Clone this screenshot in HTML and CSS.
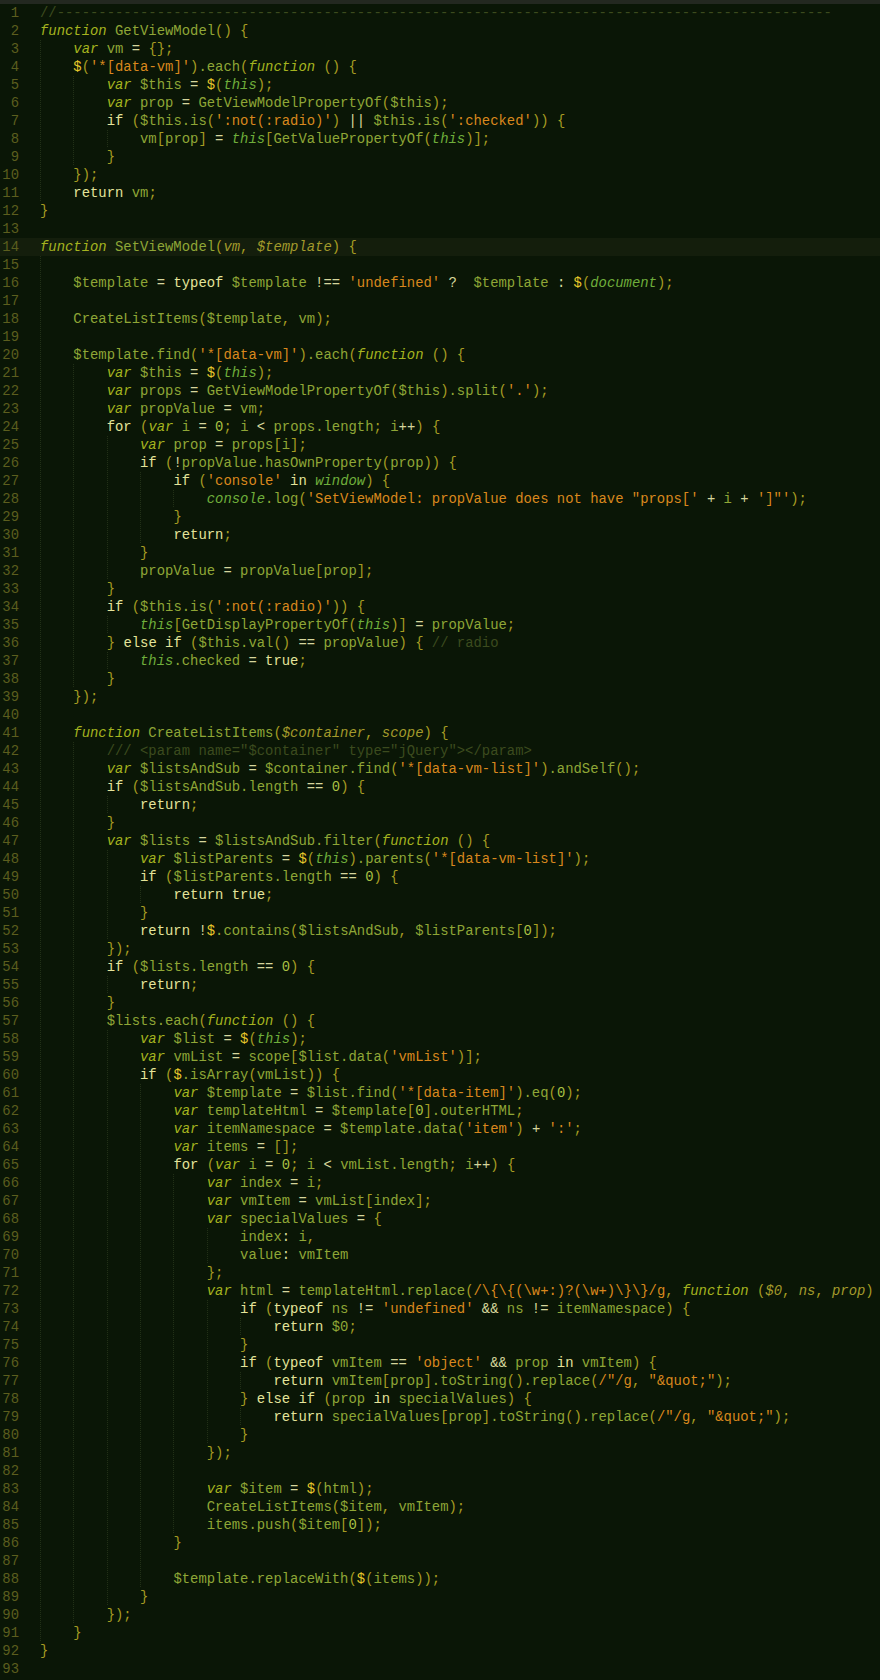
FILE: index.html
```html
<!DOCTYPE html>
<html lang="en">
  <head>
    <meta charset="UTF-8" />
    <meta name="viewport" content="width=device-width, initial-scale=1.0" />
    <title>viewmodel.js</title>
    <link rel="stylesheet" href="styles.css">
  </head>
  <body>
    <div class="tabs"></div>

    <div class="editor">
<div class="line"><span class="num">1</span><span class="code"><span class="m">//---------------------------------------------------------------------------------------------</span></span></div>
<div class="line"><span class="num">2</span><span class="code"><span class="k">function</span> GetViewModel<span class="p">() {</span></span></div>
<div class="line"><span class="num">3</span><span class="code"><span class="g">    </span><span class="k">var</span> vm <span class="o">=</span> <span class="p">{};</span></span></div>
<div class="line"><span class="num">4</span><span class="code"><span class="g">    </span><span class="d">$</span><span class="p">(</span><span class="s">'*[data-vm]'</span><span class="p">)</span>.each<span class="p">(</span><span class="k">function</span> <span class="p">() {</span></span></div>
<div class="line"><span class="num">5</span><span class="code"><span class="g">    </span><span class="g">    </span><span class="k">var</span> $this <span class="o">=</span> <span class="d">$</span><span class="p">(</span><span class="t">this</span><span class="p">);</span></span></div>
<div class="line"><span class="num">6</span><span class="code"><span class="g">    </span><span class="g">    </span><span class="k">var</span> prop <span class="o">=</span> GetViewModelPropertyOf<span class="p">(</span>$this<span class="p">);</span></span></div>
<div class="line"><span class="num">7</span><span class="code"><span class="g">    </span><span class="g">    </span><span class="c">if</span> <span class="p">(</span>$this.is<span class="p">(</span><span class="s">':not(:radio)'</span><span class="p">)</span> <span class="o">||</span> $this.is<span class="p">(</span><span class="s">':checked'</span><span class="p">)) {</span></span></div>
<div class="line"><span class="num">8</span><span class="code"><span class="g">    </span><span class="g">    </span><span class="g">    </span>vm<span class="p">[</span>prop<span class="p">]</span> <span class="o">=</span> <span class="t">this</span><span class="p">[</span>GetValuePropertyOf<span class="p">(</span><span class="t">this</span><span class="p">)];</span></span></div>
<div class="line"><span class="num">9</span><span class="code"><span class="g">    </span><span class="g">    </span><span class="p">}</span></span></div>
<div class="line"><span class="num">10</span><span class="code"><span class="g">    </span><span class="p">});</span></span></div>
<div class="line"><span class="num">11</span><span class="code"><span class="g">    </span><span class="c">return</span> vm<span class="p">;</span></span></div>
<div class="line"><span class="num">12</span><span class="code"><span class="p">}</span></span></div>
<div class="line"><span class="num">13</span><span class="code"></span></div>
<div class="line cur"><span class="num">14</span><span class="code"><span class="k">function</span> SetViewModel<span class="p">(</span><span class="a">vm</span><span class="p">,</span> <span class="a">$template</span><span class="p">) {</span></span></div>
<div class="line"><span class="num">15</span><span class="code"><span class="g">    </span></span></div>
<div class="line"><span class="num">16</span><span class="code"><span class="g">    </span>$template <span class="o">=</span> <span class="c">typeof</span> $template <span class="o">!==</span> <span class="s">'undefined'</span> <span class="o">?</span>  $template <span class="o">:</span> <span class="d">$</span><span class="p">(</span><span class="t">document</span><span class="p">);</span></span></div>
<div class="line"><span class="num">17</span><span class="code"><span class="g">    </span></span></div>
<div class="line"><span class="num">18</span><span class="code"><span class="g">    </span>CreateListItems<span class="p">(</span>$template<span class="p">,</span> vm<span class="p">);</span></span></div>
<div class="line"><span class="num">19</span><span class="code"><span class="g">    </span></span></div>
<div class="line"><span class="num">20</span><span class="code"><span class="g">    </span>$template.find<span class="p">(</span><span class="s">'*[data-vm]'</span><span class="p">)</span>.each<span class="p">(</span><span class="k">function</span> <span class="p">() {</span></span></div>
<div class="line"><span class="num">21</span><span class="code"><span class="g">    </span><span class="g">    </span><span class="k">var</span> $this <span class="o">=</span> <span class="d">$</span><span class="p">(</span><span class="t">this</span><span class="p">);</span></span></div>
<div class="line"><span class="num">22</span><span class="code"><span class="g">    </span><span class="g">    </span><span class="k">var</span> props <span class="o">=</span> GetViewModelPropertyOf<span class="p">(</span>$this<span class="p">)</span>.split<span class="p">(</span><span class="s">'.'</span><span class="p">);</span></span></div>
<div class="line"><span class="num">23</span><span class="code"><span class="g">    </span><span class="g">    </span><span class="k">var</span> propValue <span class="o">=</span> vm<span class="p">;</span></span></div>
<div class="line"><span class="num">24</span><span class="code"><span class="g">    </span><span class="g">    </span><span class="c">for</span> <span class="p">(</span><span class="k">var</span> i <span class="o">=</span> <span class="n0">0</span><span class="p">;</span> i <span class="o">&lt;</span> props.length<span class="p">;</span> i<span class="o">++</span><span class="p">) {</span></span></div>
<div class="line"><span class="num">25</span><span class="code"><span class="g">    </span><span class="g">    </span><span class="g">    </span><span class="k">var</span> prop <span class="o">=</span> props<span class="p">[</span>i<span class="p">];</span></span></div>
<div class="line"><span class="num">26</span><span class="code"><span class="g">    </span><span class="g">    </span><span class="g">    </span><span class="c">if</span> <span class="p">(</span><span class="o">!</span>propValue.hasOwnProperty<span class="p">(</span>prop<span class="p">)) {</span></span></div>
<div class="line"><span class="num">27</span><span class="code"><span class="g">    </span><span class="g">    </span><span class="g">    </span><span class="g">    </span><span class="c">if</span> <span class="p">(</span><span class="s">'console'</span> <span class="c">in</span> <span class="t">window</span><span class="p">) {</span></span></div>
<div class="line"><span class="num">28</span><span class="code"><span class="g">    </span><span class="g">    </span><span class="g">    </span><span class="g">    </span><span class="g">    </span><span class="t">console</span>.log<span class="p">(</span><span class="s">'SetViewModel: propValue does not have "props['</span> <span class="o">+</span> i <span class="o">+</span> <span class="s">']"'</span><span class="p">);</span></span></div>
<div class="line"><span class="num">29</span><span class="code"><span class="g">    </span><span class="g">    </span><span class="g">    </span><span class="g">    </span><span class="p">}</span></span></div>
<div class="line"><span class="num">30</span><span class="code"><span class="g">    </span><span class="g">    </span><span class="g">    </span><span class="g">    </span><span class="c">return</span><span class="p">;</span></span></div>
<div class="line"><span class="num">31</span><span class="code"><span class="g">    </span><span class="g">    </span><span class="g">    </span><span class="p">}</span></span></div>
<div class="line"><span class="num">32</span><span class="code"><span class="g">    </span><span class="g">    </span><span class="g">    </span>propValue <span class="o">=</span> propValue<span class="p">[</span>prop<span class="p">];</span></span></div>
<div class="line"><span class="num">33</span><span class="code"><span class="g">    </span><span class="g">    </span><span class="p">}</span></span></div>
<div class="line"><span class="num">34</span><span class="code"><span class="g">    </span><span class="g">    </span><span class="c">if</span> <span class="p">(</span>$this.is<span class="p">(</span><span class="s">':not(:radio)'</span><span class="p">)) {</span></span></div>
<div class="line"><span class="num">35</span><span class="code"><span class="g">    </span><span class="g">    </span><span class="g">    </span><span class="t">this</span><span class="p">[</span>GetDisplayPropertyOf<span class="p">(</span><span class="t">this</span><span class="p">)]</span> <span class="o">=</span> propValue<span class="p">;</span></span></div>
<div class="line"><span class="num">36</span><span class="code"><span class="g">    </span><span class="g">    </span><span class="p">}</span> <span class="c">else if</span> <span class="p">(</span>$this.val<span class="p">()</span> <span class="o">==</span> propValue<span class="p">) {</span> <span class="m">// radio</span></span></div>
<div class="line"><span class="num">37</span><span class="code"><span class="g">    </span><span class="g">    </span><span class="g">    </span><span class="t">this</span>.checked <span class="o">=</span> <span class="c">true</span><span class="p">;</span></span></div>
<div class="line"><span class="num">38</span><span class="code"><span class="g">    </span><span class="g">    </span><span class="p">}</span></span></div>
<div class="line"><span class="num">39</span><span class="code"><span class="g">    </span><span class="p">});</span></span></div>
<div class="line"><span class="num">40</span><span class="code"><span class="g">    </span></span></div>
<div class="line"><span class="num">41</span><span class="code"><span class="g">    </span><span class="k">function</span> CreateListItems<span class="p">(</span><span class="a">$container</span><span class="p">,</span> <span class="a">scope</span><span class="p">) {</span></span></div>
<div class="line"><span class="num">42</span><span class="code"><span class="g">    </span><span class="g">    </span><span class="m">/// &lt;param name="$container" type="jQuery"&gt;&lt;/param&gt;</span></span></div>
<div class="line"><span class="num">43</span><span class="code"><span class="g">    </span><span class="g">    </span><span class="k">var</span> $listsAndSub <span class="o">=</span> $container.find<span class="p">(</span><span class="s">'*[data-vm-list]'</span><span class="p">)</span>.andSelf<span class="p">();</span></span></div>
<div class="line"><span class="num">44</span><span class="code"><span class="g">    </span><span class="g">    </span><span class="c">if</span> <span class="p">(</span>$listsAndSub.length <span class="o">==</span> <span class="n0">0</span><span class="p">) {</span></span></div>
<div class="line"><span class="num">45</span><span class="code"><span class="g">    </span><span class="g">    </span><span class="g">    </span><span class="c">return</span><span class="p">;</span></span></div>
<div class="line"><span class="num">46</span><span class="code"><span class="g">    </span><span class="g">    </span><span class="p">}</span></span></div>
<div class="line"><span class="num">47</span><span class="code"><span class="g">    </span><span class="g">    </span><span class="k">var</span> $lists <span class="o">=</span> $listsAndSub.filter<span class="p">(</span><span class="k">function</span> <span class="p">() {</span></span></div>
<div class="line"><span class="num">48</span><span class="code"><span class="g">    </span><span class="g">    </span><span class="g">    </span><span class="k">var</span> $listParents <span class="o">=</span> <span class="d">$</span><span class="p">(</span><span class="t">this</span><span class="p">)</span>.parents<span class="p">(</span><span class="s">'*[data-vm-list]'</span><span class="p">);</span></span></div>
<div class="line"><span class="num">49</span><span class="code"><span class="g">    </span><span class="g">    </span><span class="g">    </span><span class="c">if</span> <span class="p">(</span>$listParents.length <span class="o">==</span> <span class="n0">0</span><span class="p">) {</span></span></div>
<div class="line"><span class="num">50</span><span class="code"><span class="g">    </span><span class="g">    </span><span class="g">    </span><span class="g">    </span><span class="c">return true</span><span class="p">;</span></span></div>
<div class="line"><span class="num">51</span><span class="code"><span class="g">    </span><span class="g">    </span><span class="g">    </span><span class="p">}</span></span></div>
<div class="line"><span class="num">52</span><span class="code"><span class="g">    </span><span class="g">    </span><span class="g">    </span><span class="c">return</span> <span class="o">!</span><span class="d">$</span>.contains<span class="p">(</span>$listsAndSub<span class="p">,</span> $listParents<span class="p">[</span><span class="n0">0</span><span class="p">]);</span></span></div>
<div class="line"><span class="num">53</span><span class="code"><span class="g">    </span><span class="g">    </span><span class="p">});</span></span></div>
<div class="line"><span class="num">54</span><span class="code"><span class="g">    </span><span class="g">    </span><span class="c">if</span> <span class="p">(</span>$lists.length <span class="o">==</span> <span class="n0">0</span><span class="p">) {</span></span></div>
<div class="line"><span class="num">55</span><span class="code"><span class="g">    </span><span class="g">    </span><span class="g">    </span><span class="c">return</span><span class="p">;</span></span></div>
<div class="line"><span class="num">56</span><span class="code"><span class="g">    </span><span class="g">    </span><span class="p">}</span></span></div>
<div class="line"><span class="num">57</span><span class="code"><span class="g">    </span><span class="g">    </span>$lists.each<span class="p">(</span><span class="k">function</span> <span class="p">() {</span></span></div>
<div class="line"><span class="num">58</span><span class="code"><span class="g">    </span><span class="g">    </span><span class="g">    </span><span class="k">var</span> $list <span class="o">=</span> <span class="d">$</span><span class="p">(</span><span class="t">this</span><span class="p">);</span></span></div>
<div class="line"><span class="num">59</span><span class="code"><span class="g">    </span><span class="g">    </span><span class="g">    </span><span class="k">var</span> vmList <span class="o">=</span> scope<span class="p">[</span>$list.data<span class="p">(</span><span class="s">'vmList'</span><span class="p">)];</span></span></div>
<div class="line"><span class="num">60</span><span class="code"><span class="g">    </span><span class="g">    </span><span class="g">    </span><span class="c">if</span> <span class="p">(</span><span class="d">$</span>.isArray<span class="p">(</span>vmList<span class="p">)) {</span></span></div>
<div class="line"><span class="num">61</span><span class="code"><span class="g">    </span><span class="g">    </span><span class="g">    </span><span class="g">    </span><span class="k">var</span> $template <span class="o">=</span> $list.find<span class="p">(</span><span class="s">'*[data-item]'</span><span class="p">)</span>.eq<span class="p">(</span><span class="n0">0</span><span class="p">);</span></span></div>
<div class="line"><span class="num">62</span><span class="code"><span class="g">    </span><span class="g">    </span><span class="g">    </span><span class="g">    </span><span class="k">var</span> templateHtml <span class="o">=</span> $template<span class="p">[</span><span class="n0">0</span><span class="p">]</span>.outerHTML<span class="p">;</span></span></div>
<div class="line"><span class="num">63</span><span class="code"><span class="g">    </span><span class="g">    </span><span class="g">    </span><span class="g">    </span><span class="k">var</span> itemNamespace <span class="o">=</span> $template.data<span class="p">(</span><span class="s">'item'</span><span class="p">)</span> <span class="o">+</span> <span class="s">':'</span><span class="p">;</span></span></div>
<div class="line"><span class="num">64</span><span class="code"><span class="g">    </span><span class="g">    </span><span class="g">    </span><span class="g">    </span><span class="k">var</span> items <span class="o">=</span> <span class="p">[];</span></span></div>
<div class="line"><span class="num">65</span><span class="code"><span class="g">    </span><span class="g">    </span><span class="g">    </span><span class="g">    </span><span class="c">for</span> <span class="p">(</span><span class="k">var</span> i <span class="o">=</span> <span class="n0">0</span><span class="p">;</span> i <span class="o">&lt;</span> vmList.length<span class="p">;</span> i<span class="o">++</span><span class="p">) {</span></span></div>
<div class="line"><span class="num">66</span><span class="code"><span class="g">    </span><span class="g">    </span><span class="g">    </span><span class="g">    </span><span class="g">    </span><span class="k">var</span> index <span class="o">=</span> i<span class="p">;</span></span></div>
<div class="line"><span class="num">67</span><span class="code"><span class="g">    </span><span class="g">    </span><span class="g">    </span><span class="g">    </span><span class="g">    </span><span class="k">var</span> vmItem <span class="o">=</span> vmList<span class="p">[</span>index<span class="p">];</span></span></div>
<div class="line"><span class="num">68</span><span class="code"><span class="g">    </span><span class="g">    </span><span class="g">    </span><span class="g">    </span><span class="g">    </span><span class="k">var</span> specialValues <span class="o">=</span> <span class="p">{</span></span></div>
<div class="line"><span class="num">69</span><span class="code"><span class="g">    </span><span class="g">    </span><span class="g">    </span><span class="g">    </span><span class="g">    </span><span class="g">    </span>index<span class="o">:</span> i<span class="p">,</span></span></div>
<div class="line"><span class="num">70</span><span class="code"><span class="g">    </span><span class="g">    </span><span class="g">    </span><span class="g">    </span><span class="g">    </span><span class="g">    </span>value<span class="o">:</span> vmItem</span></div>
<div class="line"><span class="num">71</span><span class="code"><span class="g">    </span><span class="g">    </span><span class="g">    </span><span class="g">    </span><span class="g">    </span><span class="p">};</span></span></div>
<div class="line"><span class="num">72</span><span class="code"><span class="g">    </span><span class="g">    </span><span class="g">    </span><span class="g">    </span><span class="g">    </span><span class="k">var</span> html <span class="o">=</span> templateHtml.replace<span class="p">(</span><span class="r">/\{\{(\w+:)?(\w+)\}\}/g</span><span class="p">,</span> <span class="k">function</span> <span class="p">(</span><span class="a">$0</span><span class="p">,</span> <span class="a">ns</span><span class="p">,</span> <span class="a">prop</span><span class="p">) {</span></span></div>
<div class="line"><span class="num">73</span><span class="code"><span class="g">    </span><span class="g">    </span><span class="g">    </span><span class="g">    </span><span class="g">    </span><span class="g">    </span><span class="c">if</span> <span class="p">(</span><span class="c">typeof</span> ns <span class="o">!=</span> <span class="s">'undefined'</span> <span class="o">&amp;&amp;</span> ns <span class="o">!=</span> itemNamespace<span class="p">) {</span></span></div>
<div class="line"><span class="num">74</span><span class="code"><span class="g">    </span><span class="g">    </span><span class="g">    </span><span class="g">    </span><span class="g">    </span><span class="g">    </span><span class="g">    </span><span class="c">return</span> $0<span class="p">;</span></span></div>
<div class="line"><span class="num">75</span><span class="code"><span class="g">    </span><span class="g">    </span><span class="g">    </span><span class="g">    </span><span class="g">    </span><span class="g">    </span><span class="p">}</span></span></div>
<div class="line"><span class="num">76</span><span class="code"><span class="g">    </span><span class="g">    </span><span class="g">    </span><span class="g">    </span><span class="g">    </span><span class="g">    </span><span class="c">if</span> <span class="p">(</span><span class="c">typeof</span> vmItem <span class="o">==</span> <span class="s">'object'</span> <span class="o">&amp;&amp;</span> prop <span class="c">in</span> vmItem<span class="p">) {</span></span></div>
<div class="line"><span class="num">77</span><span class="code"><span class="g">    </span><span class="g">    </span><span class="g">    </span><span class="g">    </span><span class="g">    </span><span class="g">    </span><span class="g">    </span><span class="c">return</span> vmItem<span class="p">[</span>prop<span class="p">]</span>.toString<span class="p">()</span>.replace<span class="p">(</span><span class="r">/"/g</span><span class="p">,</span> <span class="s">"&amp;quot;"</span><span class="p">);</span></span></div>
<div class="line"><span class="num">78</span><span class="code"><span class="g">    </span><span class="g">    </span><span class="g">    </span><span class="g">    </span><span class="g">    </span><span class="g">    </span><span class="p">}</span> <span class="c">else if</span> <span class="p">(</span>prop <span class="c">in</span> specialValues<span class="p">) {</span></span></div>
<div class="line"><span class="num">79</span><span class="code"><span class="g">    </span><span class="g">    </span><span class="g">    </span><span class="g">    </span><span class="g">    </span><span class="g">    </span><span class="g">    </span><span class="c">return</span> specialValues<span class="p">[</span>prop<span class="p">]</span>.toString<span class="p">()</span>.replace<span class="p">(</span><span class="r">/"/g</span><span class="p">,</span> <span class="s">"&amp;quot;"</span><span class="p">);</span></span></div>
<div class="line"><span class="num">80</span><span class="code"><span class="g">    </span><span class="g">    </span><span class="g">    </span><span class="g">    </span><span class="g">    </span><span class="g">    </span><span class="p">}</span></span></div>
<div class="line"><span class="num">81</span><span class="code"><span class="g">    </span><span class="g">    </span><span class="g">    </span><span class="g">    </span><span class="g">    </span><span class="p">});</span></span></div>
<div class="line"><span class="num">82</span><span class="code"><span class="g">    </span><span class="g">    </span><span class="g">    </span><span class="g">    </span><span class="g">    </span></span></div>
<div class="line"><span class="num">83</span><span class="code"><span class="g">    </span><span class="g">    </span><span class="g">    </span><span class="g">    </span><span class="g">    </span><span class="k">var</span> $item <span class="o">=</span> <span class="d">$</span><span class="p">(</span>html<span class="p">);</span></span></div>
<div class="line"><span class="num">84</span><span class="code"><span class="g">    </span><span class="g">    </span><span class="g">    </span><span class="g">    </span><span class="g">    </span>CreateListItems<span class="p">(</span>$item<span class="p">,</span> vmItem<span class="p">);</span></span></div>
<div class="line"><span class="num">85</span><span class="code"><span class="g">    </span><span class="g">    </span><span class="g">    </span><span class="g">    </span><span class="g">    </span>items.push<span class="p">(</span>$item<span class="p">[</span><span class="n0">0</span><span class="p">]);</span></span></div>
<div class="line"><span class="num">86</span><span class="code"><span class="g">    </span><span class="g">    </span><span class="g">    </span><span class="g">    </span><span class="p">}</span></span></div>
<div class="line"><span class="num">87</span><span class="code"><span class="g">    </span><span class="g">    </span><span class="g">    </span><span class="g">    </span></span></div>
<div class="line"><span class="num">88</span><span class="code"><span class="g">    </span><span class="g">    </span><span class="g">    </span><span class="g">    </span>$template.replaceWith<span class="p">(</span><span class="d">$</span><span class="p">(</span>items<span class="p">));</span></span></div>
<div class="line"><span class="num">89</span><span class="code"><span class="g">    </span><span class="g">    </span><span class="g">    </span><span class="p">}</span></span></div>
<div class="line"><span class="num">90</span><span class="code"><span class="g">    </span><span class="g">    </span><span class="p">});</span></span></div>
<div class="line"><span class="num">91</span><span class="code"><span class="g">    </span><span class="p">}</span></span></div>
<div class="line"><span class="num">92</span><span class="code"><span class="p">}</span></span></div>
<div class="line"><span class="num">93</span><span class="code"></span></div>
    </div>
  </body>
</html>
```

FILE: styles.css
```css
body {
  margin: 0;
  background-color: #0a1606;
  font-family: "Liberation Mono", "DejaVu Sans Mono", monospace;
  font-size: 13.9px;
  line-height: 18px;
  color: #8fa636;
  overflow: hidden;
}

/* strip of the tab bar above the editor */
.tabs {
  height: 4px;
  background-color: #232820;
}

.editor {
  overflow: hidden;
}

.line {
  display: flex;
  height: 18px;
  white-space: pre;
}

.line.cur {
  background-color: #141e0c;
}

.num {
  flex: none;
  width: 19px;
  text-align: right;
  color: #5c5e1e;
}

.code {
  margin-left: 21px;
}

/* indent guides */
.g {
  display: inline-block;
  height: 18px;
  vertical-align: top;
  background: linear-gradient(#223017 50%, transparent 50%) 0 0 / 1px 2px repeat-y;
}

/* syntax colours */
.k {
  color: #a5b41f;
  font-style: italic;
}

.c {
  color: #e4e49a;
}

.p {
  color: #a69c22;
}

.o {
  color: #d6d69c;
}

.d {
  color: #e6c72b;
}

.t {
  color: #6fae3b;
  font-style: italic;
}

.a {
  color: #a39a2b;
  font-style: italic;
}

.s,
.r {
  color: #d9881d;
}

.m {
  color: #3c4b1e;
}

.n0 {
  color: #a9c043;
}
```
